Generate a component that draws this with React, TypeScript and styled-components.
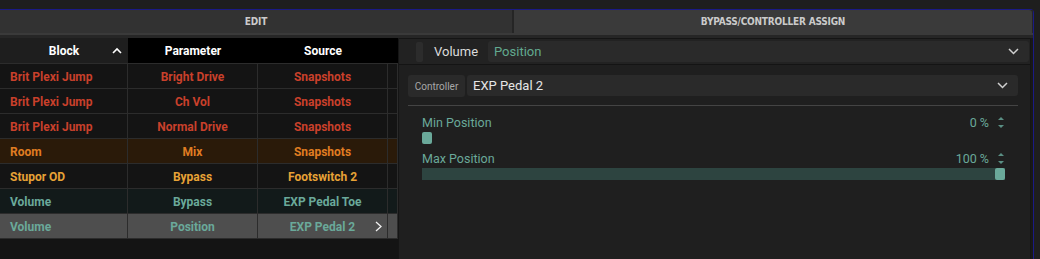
import React from 'react';
import styled, { createGlobalStyle } from 'styled-components';

const GlobalStyle = createGlobalStyle`
  html, body {
    margin: 0;
    padding: 0;
    background: #1e1e1e;
    font-family: Roboto, 'Liberation Sans', sans-serif;
  }
`;

const Root = styled('div')`
  width: 1040px;
  height: 259px;
  padding-top: 9px;
  box-sizing: border-box;
  background: #1e1e1e;
  overflow: hidden;
`;

const Frame = styled('div')`
  width: 1034px;
  height: 250px;
  box-sizing: border-box;
  border-top: 1px solid #1a1a86;
  border-right: 1px solid #1a1a86;
  border-top-right-radius: 4px;
  display: flex;
  flex-direction: column;
  background: #181818;
`;

const TabBar = styled('div')`
  display: flex;
  gap: 2px;
  height: 23px;
  background: #252525;
  flex: 0 0 auto;
`;

const Tab = styled('div')<{ $active?: boolean }>`
  flex: 0 0 ${(p) => (p.$active ? '518px' : '512px')};
  display: flex;
  align-items: center;
  justify-content: center;
  background: ${(p) => (p.$active ? '#3a3a3a' : '#323232')};
  color: #cacaca;
  font-family: 'DejaVu Sans Condensed', Roboto, sans-serif;
  font-size: 10px;
  font-weight: 700;
  letter-spacing: -0.2px;
  user-select: none;
  border-top-right-radius: ${(p) => (p.$active ? '3px' : '0')};
`;

const Strip = styled('div')`
  height: 5px;
  background: linear-gradient(#3a3a3a 0, #3a3a3a 2px, #262626 2px);
  flex: 0 0 auto;
`;

const Body = styled('div')`
  display: flex;
  flex: 1;
  min-height: 0;
`;

const Left = styled('div')`
  width: 398px;
  flex: 0 0 398px;
  background: #141414;
  display: flex;
  flex-direction: column;
`;

const COLS = '128px 130px 130px 10px';

const HeaderRow = styled('div')`
  display: grid;
  grid-template-columns: ${COLS};
  height: 25px;
  background: #000;
  border-bottom: 1px solid #2c2c2c;
`;

const HeaderCell = styled('div')<{ $sorted?: boolean }>`
  position: relative;
  display: flex;
  align-items: center;
  justify-content: center;
  color: #fff;
  font-size: 12px;
  font-weight: 700;
  background: ${(p) => (p.$sorted ? '#1e1e1e' : '#000')};
`;

const Caret = styled('svg')`
  position: absolute;
  right: 6px;
  top: 9px;
`;

type Tone = 'red' | 'room' | 'amber' | 'teal' | 'selected';

const toneText: Record<Tone, string> = {
  red: '#c9402b',
  room: '#e07d22',
  amber: '#e7a236',
  teal: '#6aa99a',
  selected: '#6aa99a',
};

const toneBg: Record<Tone, string> = {
  red: '#141414',
  room: '#2a1a09',
  amber: '#141414',
  teal: '#121a1a',
  selected: '#4e4e4e',
};

const Row = styled('div')<{ $tone: Tone }>`
  display: grid;
  grid-template-columns: ${COLS};
  height: 24px;
  border-bottom: 1px solid #2c2c2c;
  background: ${(p) => toneBg[p.$tone]};
  color: ${(p) => toneText[p.$tone]};
  font-size: 12px;
  font-weight: 700;
`;

const Cell = styled('div')<{ $left?: boolean }>`
  position: relative;
  display: flex;
  align-items: center;
  justify-content: ${(p) => (p.$left ? 'flex-start' : 'center')};
  padding-left: ${(p) => (p.$left ? '10px' : '0')};
  padding-top: 1px;
  border-right: 1px solid #2c2c2c;
  white-space: nowrap;
`;

const RowArrow = styled('svg')`
  position: absolute;
  right: 5px;
  top: 7px;
`;

const Right = styled('div')`
  flex: 1;
  display: flex;
  padding-right: 2px;
`;

const Panel = styled('div')`
  flex: 1;
  display: flex;
  flex-direction: column;
  background: #1f1f1f;
  border: 1px solid #151515;
  border-bottom: none;
  border-radius: 3px 3px 0 0;
`;

const PanelHead = styled('div')`
  display: flex;
  align-items: center;
  height: 25px;
  padding: 0 1px 0 17px;
  background: #222;
  border-bottom: 1px solid #141414;
`;

const Handle = styled('div')`
  width: 7px;
  height: 20px;
  border-radius: 2px;
  background: #2c2c2c;
  margin-right: 11px;
`;

const HeadTitle = styled('div')`
  color: #dcdcdc;
  font-size: 13px;
  width: 54px;
`;

const Select = styled('div')<{ $teal?: boolean }>`
  flex: 1;
  height: 21px;
  display: flex;
  align-items: center;
  justify-content: space-between;
  padding: 0 10px 0 6px;
  background: #2a2a2a;
  border-radius: 3px;
  color: ${(p) => (p.$teal ? '#62a98f' : '#e6e6e6')};
  font-size: 13px;
`;

const Content = styled('div')`
  padding: 10px 12px 0 9px;
  display: flex;
  flex-direction: column;
`;

const ControllerRow = styled('div')`
  display: flex;
  gap: 2px;
  height: 22px;
`;

const CtrlLabel = styled('div')`
  width: 57px;
  display: flex;
  align-items: center;
  justify-content: center;
  background: #2a2a2a;
  border-radius: 3px;
  color: #a8a8a8;
  font-size: 10px;
`;

const Divider = styled('div')`
  height: 1px;
  background: #444;
  margin-top: 8px;
`;

const Params = styled('div')`
  padding: 8px 13px 0 13px;
  display: flex;
  flex-direction: column;
  gap: 6px;
`;

const Param = styled('div')`
  display: flex;
  flex-direction: column;
`;

const ParamTop = styled('div')`
  display: flex;
  align-items: center;
  justify-content: space-between;
  height: 16px;
  color: #6aa99a;
  font-size: 12.5px;
  padding-left: 1px;
`;

const ValueBox = styled('div')`
  display: flex;
  align-items: center;
  gap: 8px;
`;

const Spinner = styled('div')`
  display: flex;
  flex-direction: column;
  gap: 5px;
  width: 8px;
  align-items: center;
`;

const Tri = styled('div')<{ $down?: boolean }>`
  width: 0;
  height: 0;
  border-left: 3px solid transparent;
  border-right: 3px solid transparent;
  ${(p) => (p.$down ? 'border-top: 3px solid #5a8f84;' : 'border-bottom: 3px solid #5a8f84;')}
`;

const Track = styled('div')`
  position: relative;
  height: 12px;
  margin-top: 2px;
  margin-left: 1px;
`;

const Fill = styled('div')`
  height: 100%;
  background: #2d4440;
`;

const Thumb = styled('div')`
  position: absolute;
  top: 0;
  width: 10px;
  height: 12px;
  border-radius: 2px;
  background: #6aa99a;
`;

const Chevron = () => (
  <svg width="11" height="7" viewBox="0 0 11 7">
    <polyline points="1,1 5.5,5.5 10,1" fill="none" stroke="#d0d0d0" strokeWidth="1.5" />
  </svg>
);

type Assign = { block: string; param: string; source: string; tone: Tone };

const rows: Assign[] = [
  { block: 'Brit Plexi Jump', param: 'Bright Drive', source: 'Snapshots', tone: 'red' },
  { block: 'Brit Plexi Jump', param: 'Ch Vol', source: 'Snapshots', tone: 'red' },
  { block: 'Brit Plexi Jump', param: 'Normal Drive', source: 'Snapshots', tone: 'red' },
  { block: 'Room', param: 'Mix', source: 'Snapshots', tone: 'room' },
  { block: 'Stupor OD', param: 'Bypass', source: 'Footswitch 2', tone: 'amber' },
  { block: 'Volume', param: 'Bypass', source: 'EXP Pedal Toe', tone: 'teal' },
  { block: 'Volume', param: 'Position', source: 'EXP Pedal 2', tone: 'selected' },
];

const params = [
  { name: 'Min Position', value: 0 },
  { name: 'Max Position', value: 100 },
];

const App: React.FunctionComponent = () => {
  return (
    <Root>
      <GlobalStyle />
      <Frame>
        <TabBar>
          <Tab>EDIT</Tab>
          <Tab $active>BYPASS/CONTROLLER ASSIGN</Tab>
        </TabBar>
        <Strip />
        <Body>
          <Left>
            <HeaderRow>
              <HeaderCell $sorted>
                Block
                <Caret width="10" height="7" viewBox="0 0 10 7">
                  <polyline points="1,6 5,2 9,6" fill="none" stroke="#fff" strokeWidth="1.6" />
                </Caret>
              </HeaderCell>
              <HeaderCell>Parameter</HeaderCell>
              <HeaderCell>Source</HeaderCell>
              <HeaderCell />
            </HeaderRow>
            {rows.map((r, i) => (
              <Row key={i} $tone={r.tone}>
                <Cell $left>{r.block}</Cell>
                <Cell>{r.param}</Cell>
                <Cell>
                  {r.source}
                  {r.tone === 'selected' && (
                    <RowArrow width="7" height="11" viewBox="0 0 7 11">
                      <polyline points="1,1 6,5.5 1,10" fill="none" stroke="#f0f0f0" strokeWidth="1.3" />
                    </RowArrow>
                  )}
                </Cell>
                <Cell />
              </Row>
            ))}
          </Left>
          <Right>
            <Panel>
              <PanelHead>
                <Handle />
                <HeadTitle>Volume</HeadTitle>
                <Select $teal>
                  Position
                  <Chevron />
                </Select>
              </PanelHead>
              <Content>
                <ControllerRow>
                  <CtrlLabel>Controller</CtrlLabel>
                  <Select>
                    EXP Pedal 2
                    <Chevron />
                  </Select>
                </ControllerRow>
                <Divider />
                <Params>
                  {params.map((p) => (
                    <Param key={p.name}>
                      <ParamTop>
                        {p.name}
                        <ValueBox>
                          {p.value} %
                          <Spinner>
                            <Tri />
                            <Tri $down />
                          </Spinner>
                        </ValueBox>
                      </ParamTop>
                      <Track>
                        <Fill style={{ width: `${p.value}%` }} />
                        <Thumb style={{ left: `calc(${p.value}% - ${p.value / 10}px)` }} />
                      </Track>
                    </Param>
                  ))}
                </Params>
              </Content>
            </Panel>
          </Right>
        </Body>
      </Frame>
    </Root>
  );
};

export default App;
